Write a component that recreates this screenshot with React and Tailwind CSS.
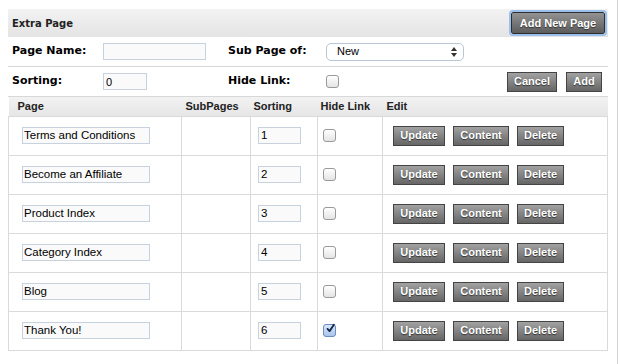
import React from 'react'

const pages = [
    { name: 'Terms and Conditions', sort: '1', hide: false },
    { name: 'Become an Affiliate', sort: '2', hide: false },
    { name: 'Product Index', sort: '3', hide: false },
    { name: 'Category Index', sort: '4', hide: false },
    { name: 'Blog', sort: '5', hide: false },
    { name: 'Thank You!', sort: '6', hide: true },
]

const Btn = ({ children, className = '' }) => (
    <button className={`h-[20px] px-[5px] border border-[#444] bg-linear-to-b from-[#a2a2a2] to-[#666] text-white text-[11px] font-bold font-['Liberation_Sans',Arial,sans-serif] [text-shadow:0_1px_1px_#333] leading-none ${className}`}>
        {children}
    </button>
)

const Check = ({ checked }) => (
    <span className={`inline-flex items-center justify-center w-[13px] h-[13px] rounded-[3px] border ${checked ? 'border-[#6a8cc0] bg-linear-to-b from-[#dbe8f8] to-[#a9c4ea]' : 'border-[#9a9a9a] bg-linear-to-b from-white to-[#e4e4e4]'}`}>
        {checked && (
            <svg width="13" height="13" viewBox="0 0 12 12" className="-mt-[4px] ml-[2px]">
                <path d="M2 6.5 L4.8 9.5 L10.5 1" stroke="#14254a" strokeWidth="2.4" fill="none" strokeLinecap="round" strokeLinejoin="round" />
            </svg>
        )}
    </span>
)

export default function App() {
    return (
        <div className="w-[618px] h-[364px] border-r border-[#d4d4d4] bg-white pl-[8px] pt-[9px] font-['DejaVu_Sans',Verdana,sans-serif] text-black">
            <div className="w-[600px]">
                {/* Header */}
                <div className="h-[28px] flex items-center justify-between bg-linear-to-b from-[#f2f2f2] to-[#e4e4e4] pl-[4px] pr-[3px]">
                    <span className="text-[10px] font-bold text-[#222]">Extra Page</span>
                    <button className="h-[22px] w-[94px] border border-[#2e2e2e] rounded-[2px] bg-linear-to-b from-[#939393] to-[#5c5c5c] text-white text-[11px] font-bold font-['Liberation_Sans',Arial,sans-serif] [text-shadow:0_1px_1px_#333] outline outline-[2px] outline-[#9cc0ee]">
                        Add New Page
                    </button>
                </div>

                {/* Page Name row */}
                <div className="h-[30px] flex items-center border-b border-[#d8d8d8] pl-[4px]">
                    <span className="w-[91px] text-[11px] font-bold">Page Name:</span>
                    <input className="w-[103px] h-[17px] border border-[#c7d2de] bg-[#fafafa] outline-none" />
                    <span className="ml-[22px] w-[98px] text-[11px] font-bold">Sub Page of:</span>
                    <div className="w-[138px] h-[18px] rounded-[5px] border border-[#b9c6d6] bg-white flex items-center justify-between pl-[10px] pr-[6px] text-[11px] font-['Liberation_Sans',Arial,sans-serif]">
                        <span>New</span>
                        <svg width="6" height="10" viewBox="0 0 6 10">
                            <path d="M0 4 L3 0 L6 4 Z M0 6 L3 10 L6 6 Z" fill="#333" />
                        </svg>
                    </div>
                </div>

                {/* Sorting row */}
                <div className="h-[30px] flex items-center border-b border-[#d8d8d8] pl-[4px] pr-[6px]">
                    <span className="w-[91px] text-[11px] font-bold">Sorting:</span>
                    <input defaultValue="0" className="w-[44px] h-[17px] border border-[#c7d2de] bg-[#fafafa] px-[2px] text-[11px] font-['Liberation_Sans',Arial,sans-serif] outline-none" />
                    <span className="ml-[81px] w-[98px] text-[11px] font-bold">Hide Link:</span>
                    <Check />
                    <div className="ml-auto flex gap-[9px]">
                        <Btn className="w-[50px]">Cancel</Btn>
                        <Btn className="w-[36px]">Add</Btn>
                    </div>
                </div>

                {/* Table */}
                <table className="w-[600px] border-collapse table-fixed font-['Liberation_Sans',Arial,sans-serif]">
                    <colgroup>
                        <col className="w-[173px]" />
                        <col className="w-[69px]" />
                        <col className="w-[67px]" />
                        <col className="w-[65px]" />
                        <col />
                    </colgroup>
                    <thead>
                        <tr className="h-[19px] bg-linear-to-b from-[#f2f2f2] to-[#e6e6e6] text-[11px] font-bold text-[#222] text-left">
                            <th className="pl-[9px] font-bold">Page</th>
                            <th className="pl-[4px] font-bold">SubPages</th>
                            <th className="pl-[3px] font-bold">Sorting</th>
                            <th className="pl-[3px] font-bold">Hide Link</th>
                            <th className="pl-[4px] font-bold">Edit</th>
                        </tr>
                    </thead>
                    <tbody>
                        {pages.map((p, i) => (
                            <tr key={i} className="h-[39px]">
                                <td className="border border-[#dadada] pl-[13px]">
                                    <input defaultValue={p.name} className="block w-[128px] h-[17px] border border-[#c7d2de] bg-[#fafafa] px-[1px] text-[11.5px] outline-none" />
                                </td>
                                <td className="border border-[#dadada]"></td>
                                <td className="border border-[#dadada] pl-[7px]">
                                    <input defaultValue={p.sort} className="block w-[43px] h-[17px] border border-[#c7d2de] bg-[#fafafa] px-[2px] text-[11.5px] outline-none" />
                                </td>
                                <td className="border border-[#dadada] pl-[5px]">
                                    <div className="flex"><Check checked={p.hide} /></div>
                                </td>
                                <td className="border border-[#dadada] pl-[10px]">
                                    <div className="flex gap-[8px]">
                                        <Btn className="w-[52px]">Update</Btn>
                                        <Btn className="w-[56px]">Content</Btn>
                                        <Btn className="w-[47px]">Delete</Btn>
                                    </div>
                                </td>
                            </tr>
                        ))}
                    </tbody>
                </table>
            </div>
        </div>
    )
}
